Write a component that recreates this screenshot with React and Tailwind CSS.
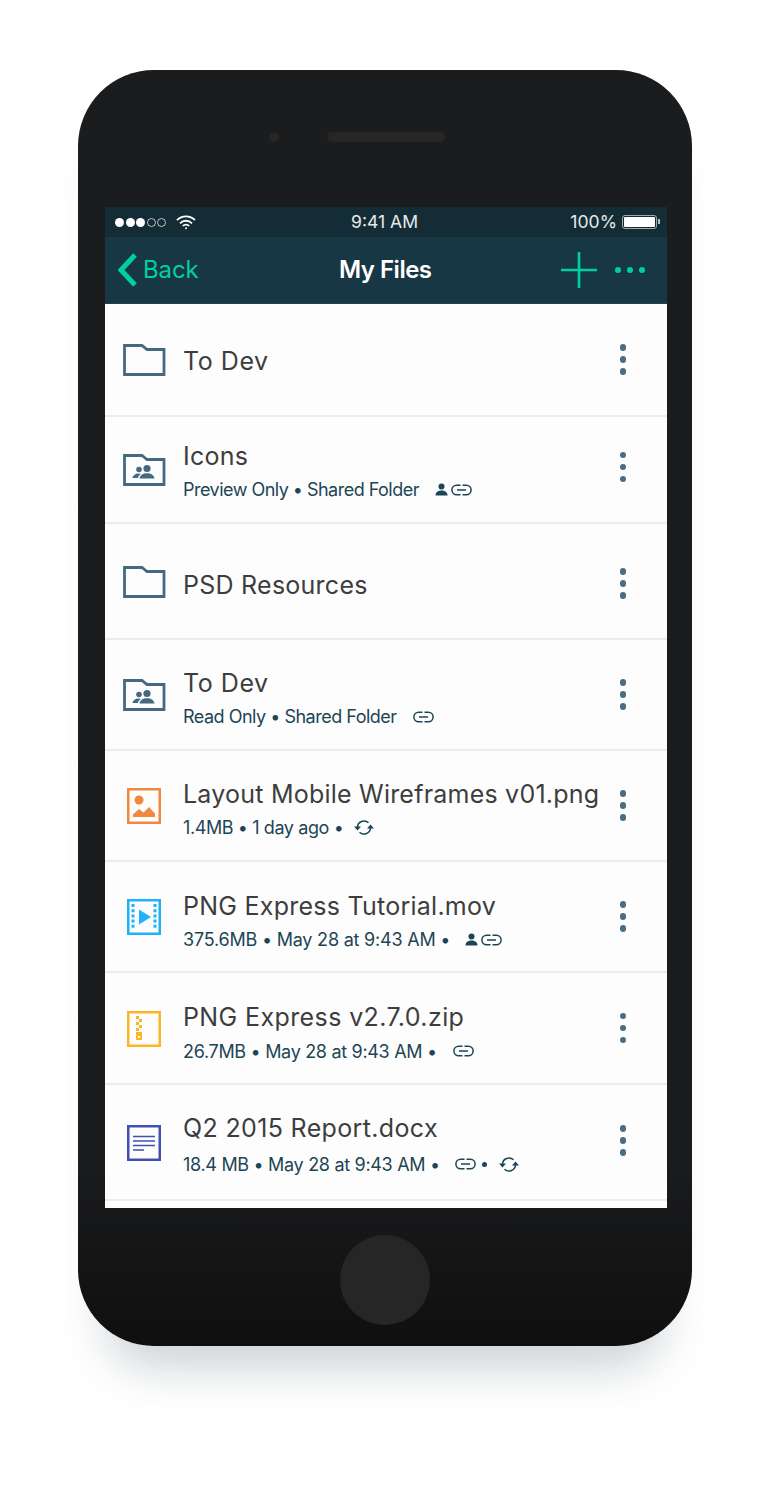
const GREEN = '#00cfa3'
const SUB = '#1d4555'
const SLATE = '#456a80'

function FolderIcon({ shared }) {
  return (
    <svg width="44" height="34" viewBox="0 0 44 34" fill="none">
      <path d="M2.500 2.500H20l5 4h17v25H2.500z" stroke={SLATE} strokeWidth="2.800" />
      {shared ? (
        <g fill={SLATE}>
          <circle cx="17" cy="16.500" r="2.800" />
          <path d="M10.500 25c.4-2.800 3-4.600 6-4.600 1 0 1.800.2 2.500.5-1.600.9-2.800 2.300-3.100 4.100z" />
          <circle cx="25" cy="15.500" r="3.600" />
          <path d="M17.500 25.500c.5-3.400 3.600-5.300 7.500-5.300s7 1.900 7.500 5.300z" />
        </g>
      ) : null}
    </svg>
  )
}

function ImageIcon() {
  return (
    <svg width="34" height="36" viewBox="0 0 34 36" fill="none">
      <rect x="1.250" y="1.250" width="31.500" height="33.500" stroke="#f0883d" strokeWidth="2.500" />
      <circle cx="12" cy="12" r="4.500" fill="#f0883d" />
      <path d="M6 29v-2.500l6-5.500 4.500 3.500L22 19l6 6.500V29z" fill="#f0883d" />
    </svg>
  )
}

function VideoIcon() {
  return (
    <svg width="34" height="36" viewBox="0 0 34 36" fill="none">
      <rect x="1.250" y="1.250" width="31.500" height="33.500" stroke="#1fb2fb" strokeWidth="2.500" />
      <path d="M12 10.500v15l12-7.500z" fill="#1fb2fb" />
      <path d="M6 5v26M28 5v26" stroke="#1fb2fb" strokeWidth="3" strokeDasharray="3 2.200" />
    </svg>
  )
}

function ZipIcon() {
  return (
    <svg width="34" height="36" viewBox="0 0 34 36" fill="none">
      <rect x="1.250" y="1.250" width="31.500" height="33.500" stroke="#fbb624" strokeWidth="2.500" />
      <g fill="#fbb624">
        <rect x="9" y="5" width="3" height="3" />
        <rect x="12" y="8" width="3" height="3" />
        <rect x="9" y="11" width="3" height="3" />
        <rect x="12" y="14" width="3" height="3" />
        <rect x="9" y="17" width="3" height="3" />
        <path fillRule="evenodd" d="M9 21h6v8H9zm2 4v2h2v-2z" />
      </g>
    </svg>
  )
}

function DocIcon() {
  return (
    <svg width="34" height="36" viewBox="0 0 34 36" fill="none">
      <rect x="1.250" y="1.250" width="31.500" height="33.500" stroke="#3f51b5" strokeWidth="2.500" />
      <path d="M6 11.500h22M6 16h22M6 20.500h22M6 25h11" stroke="#3f51b5" strokeWidth="1.500" />
    </svg>
  )
}

function PersonIcon() {
  return (
    <svg width="13" height="13" viewBox="0 0 13 13" fill={SUB}>
      <circle cx="6.500" cy="3.400" r="3" />
      <path d="M0.500 12.500c0-3.200 2.600-5 6-5s6 1.800 6 5z" />
    </svg>
  )
}

function LinkIcon() {
  return (
    <svg width="21" height="12" viewBox="0 0 21 12" fill="none" stroke={SUB} strokeWidth="1.500">
      <path d="M9.500 1.200H5.700a4.800 4.800 0 0 0 0 9.600h3.800M11.500 1.200h3.800a4.800 4.800 0 0 1 0 9.600h-3.800M6 6h9" />
    </svg>
  )
}

function SyncIcon() {
  return (
    <svg width="20" height="17" viewBox="0 0 20 17" fill="none">
      <path d="M3.500 8.500a6.500 6.500 0 0 1 11-4.700M16.500 8.500a6.500 6.500 0 0 1-11 4.700" stroke={SUB} strokeWidth="1.500" />
      <path d="M0 7.500h7L3.500 11.500zM13 9.500h7L16.500 5.500z" fill={SUB} />
    </svg>
  )
}

function Bullet() {
  return <span className="block h-[5px] w-[5px] rounded-full bg-[#1d4555]" />
}

const rows = [
  { icon: <FolderIcon />, name: 'To Dev', height: 'h-[113px]', text: 'pt-[2px]', nameText: 'tracking-[0.55px]' },
  {
    icon: <FolderIcon shared />,
    name: 'Icons',
    height: 'h-[107px]',
    text: 'pt-[3px]',
    nameText: 'tracking-[0.25px]',
    dots: 'pb-[5px]',
    meta: 'Preview Only • Shared Folder',
    metaText: 'mt-[7px] tracking-[-0.52px]',
    tail: (
      <>
        <span className="ml-[16px]"><PersonIcon /></span>
        <span className="ml-[3px]"><LinkIcon /></span>
      </>
    ),
  },
  { icon: <FolderIcon />, name: 'PSD Resources', height: 'h-[116px]', text: 'pt-[8px]', nameText: 'tracking-[0.25px]', dots: 'pt-[5px]' },
  {
    icon: <FolderIcon shared />,
    name: 'To Dev',
    height: 'h-[111px]',
    text: 'pt-[7px]',
    nameText: 'tracking-[0.55px]',
    meta: 'Read Only • Shared Folder',
    metaText: 'mt-[7px] tracking-[-0.5px]',
    tail: <span className="ml-[16px]"><LinkIcon /></span>,
  },
  {
    icon: <ImageIcon />,
    name: 'Layout Mobile Wireframes v01.png',
    height: 'h-[111px]',
    text: 'pt-[7px]',
    nameText: 'tracking-[0.22px]',
    meta: '1.4MB • 1 day ago •',
    metaText: 'mt-[7px] tracking-[-0.4px]',
    tail: <span className="ml-[11px]"><SyncIcon /></span>,
  },
  {
    icon: <VideoIcon />,
    name: 'PNG Express Tutorial.mov',
    height: 'h-[111px]',
    text: 'pt-[9px]',
    nameText: 'tracking-[0.25px]',
    meta: '375.6MB • May 28 at 9:43 AM •',
    metaText: 'mt-[7px] tracking-[-0.21px]',
    tail: (
      <>
        <span className="ml-[15px]"><PersonIcon /></span>
        <span className="ml-[3px]"><LinkIcon /></span>
      </>
    ),
  },
  {
    icon: <ZipIcon />,
    name: 'PNG Express v2.7.0.zip',
    height: 'h-[112px]',
    text: 'pt-[9px]',
    nameText: 'tracking-[0.39px]',
    meta: '26.7MB • May 28 at 9:43 AM •',
    metaText: 'mt-[7px] tracking-[-0.31px]',
    tail: <span className="ml-[16px]"><LinkIcon /></span>,
  },
  {
    icon: <DocIcon />,
    name: 'Q2 2015 Report.docx',
    height: 'h-[116px]',
    text: 'pt-[5px]',
    nameText: 'tracking-[0.35px]',
    dots: 'pb-[3px]',
    meta: '18.4 MB • May 28 at 9:43 AM •',
    metaText: 'mt-[9px] tracking-[-0.31px]',
    tail: (
      <>
        <span className="ml-[15px]"><LinkIcon /></span>
        <span className="ml-[6px]"><Bullet /></span>
        <span className="ml-[12px]"><SyncIcon /></span>
      </>
    ),
  },
]

function FileRow({ row }) {
  return (
    <div className={`flex shrink-0 items-center border-b-2 border-[#e8edf1] ${row.height}`}>
      <div className="flex w-[78px] shrink-0 justify-center pt-[1px]">{row.icon}</div>
      <div className={`min-w-0 flex-1 ${row.text}`}>
        <div className={`whitespace-nowrap text-[25px] leading-[30px] text-[#3d3d3d] ${row.nameText}`}>
          {row.name}
        </div>
        {row.meta ? (
          <div className={`flex h-[24px] items-center text-[18px] text-[#1d4555] ${row.metaText}`}>
            <span className="whitespace-nowrap">{row.meta}</span>
            {row.tail}
          </div>
        ) : null}
      </div>
      <div className={`flex w-[88px] shrink-0 flex-col items-center gap-[5.500px] ${row.dots ?? ''}`}>
        <span className="h-[6.500px] w-[6.500px] rounded-full bg-[#4a6d82]" />
        <span className="h-[6.500px] w-[6.500px] rounded-full bg-[#4a6d82]" />
        <span className="h-[6.500px] w-[6.500px] rounded-full bg-[#4a6d82]" />
      </div>
    </div>
  )
}

function StatusBar() {
  return (
    <div className="relative flex h-[30px] shrink-0 items-center justify-between bg-[#132c36] pl-[10px] pr-[7px] text-[17.600px] text-white/90">
      <div className="flex items-center">
        <div className="flex items-center gap-[1.500px]">
          <span className="h-[9px] w-[9px] rounded-full bg-white" />
          <span className="h-[9px] w-[9px] rounded-full bg-white" />
          <span className="h-[9px] w-[9px] rounded-full bg-white" />
          <span className="h-[9px] w-[9px] rounded-full border border-white/70" />
          <span className="h-[9px] w-[9px] rounded-full border border-white/70" />
        </div>
        <svg className="ml-[10px]" width="20" height="15" viewBox="0 0 20 15" fill="none" stroke="#fff" strokeWidth="1.800">
          <path d="M1 5.200a12.500 12.500 0 0 1 18 0M4 8.300a8.300 8.300 0 0 1 12 0M6.800 11a4.300 4.300 0 0 1 6.400 0" />
          <circle cx="10" cy="13.200" r="1" fill="#fff" stroke="none" />
        </svg>
      </div>
      <span className="absolute left-[246px]">9:41 AM</span>
      <div className="flex items-center">
        <span>100%</span>
        <div className="ml-[5px] h-[14px] w-[35px] rounded-[3px] border border-white/60 p-[1px]">
          <div className="h-full w-full rounded-[1px] bg-white" />
        </div>
        <span className="ml-[1px] h-[5px] w-[2px] bg-white/70" />
      </div>
    </div>
  )
}

function NavBar() {
  return (
    <div className="relative flex h-[67px] shrink-0 items-center border-b border-[#2a3f48] bg-[#173745] pl-[13px] pr-[22px]">
      <svg width="20" height="34" viewBox="0 0 20 34" fill="none" stroke={GREEN} strokeWidth="5">
        <path d="M17 2L3 17l14 15" />
      </svg>
      <span className="ml-[5px] text-[24px] tracking-[-0.1px] text-[#00cfa3]">Back</span>
      <span className="absolute left-[234px] text-[24px] font-semibold tracking-[-0.5px] text-white">My Files</span>
      <div className="ml-auto flex items-center gap-[18px]">
        <svg width="36" height="36" viewBox="0 0 36 36" stroke={GREEN} strokeWidth="2.600">
          <path d="M0 18h36M18 0v36" />
        </svg>
        <div className="flex gap-[6px]">
          <span className="h-[6px] w-[6px] rounded-full bg-[#00cfa3]" />
          <span className="h-[6px] w-[6px] rounded-full bg-[#00cfa3]" />
          <span className="h-[6px] w-[6px] rounded-full bg-[#00cfa3]" />
        </div>
      </div>
    </div>
  )
}

export default function App() {
  return (
    <div className="h-[1500px] bg-white pt-[70px] font-['Inter',sans-serif]">
      <div className="mx-auto flex h-[1276px] w-[614px] flex-col items-center rounded-[76px] bg-gradient-to-b from-[#1b1c1e] from-85% to-[#0f0f0f] pt-[62px] shadow-[0_50px_45px_-28px_rgba(50,70,85,0.24)]">
        <div className="flex items-center pl-[1px]">
          <span className="h-[10px] w-[10px] rounded-full bg-[#262626]" />
          <span className="ml-[48px] h-[10px] w-[118px] rounded-full bg-[#262626]" />
          <span className="w-[58px]" />
        </div>
        <div className="ml-[2px] mt-[65px] flex h-[1001px] w-[562px] flex-col overflow-hidden bg-[#fdfdfd]">
          <StatusBar />
          <NavBar />
          {rows.map((row, i) => (
            <FileRow key={i} row={row} />
          ))}
        </div>
        <div className="mt-[27px] h-[90px] w-[90px] rounded-full bg-[#262626]" />
      </div>
    </div>
  )
}
